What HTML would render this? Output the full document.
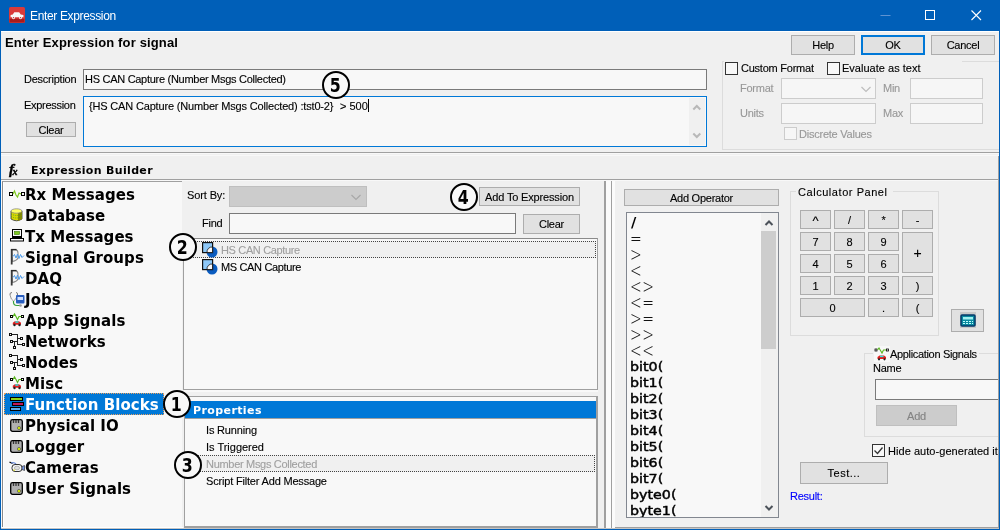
<!DOCTYPE html>
<html>
<head>
<meta charset="utf-8">
<title>Enter Expression</title>
<style>
html,body{margin:0;padding:0;background:#f0f0f0;}
body{width:1000px;height:530px;overflow:hidden;position:relative;font-family:"Liberation Sans",sans-serif;font-size:11px;color:#000;}
#win{will-change:transform;position:absolute;left:0;top:0;width:1000px;height:530px;background:#f0f0f0;overflow:hidden;}
.a{position:absolute;box-sizing:border-box;white-space:nowrap;}
.t{position:absolute;white-space:nowrap;line-height:14px;height:14px;font-size:11px;letter-spacing:-0.25px;-webkit-text-stroke:0.12px currentColor;}
.btn{position:absolute;box-sizing:border-box;border:1px solid #adadad;background:#e1e1e1;text-align:center;font-size:11px;letter-spacing:-0.25px;white-space:nowrap;-webkit-text-stroke:0.12px currentColor;}
.btn.dis{background:#cccccc;border-color:#bfbfbf;color:#838383;}
.inp{position:absolute;box-sizing:border-box;border:1px solid #7a7a7a;background:#f8f8f8;}
.inp.dis{border-color:#cccccc;background:#f6f6f6;}
.chk{position:absolute;box-sizing:border-box;width:13px;height:13px;border:1px solid #333;background:#f8f8f8;}
.chk.dis{border-color:#cccccc;background:#f6f6f6;}
.grp{position:absolute;box-sizing:border-box;border:1px solid #dcdcdc;}
.gray{color:#989898;}
.li{position:absolute;left:25px;height:21px;line-height:21px;font-family:"DejaVu Sans","Liberation Sans",sans-serif;font-weight:bold;font-size:15px;letter-spacing:0.05px;white-space:nowrap;}
.ic{position:absolute;}
.op{position:absolute;left:3px;height:16px;line-height:16px;font-family:"DejaVu Sans","Liberation Sans",sans-serif;font-weight:normal;font-size:12.5px;letter-spacing:0;-webkit-text-stroke:0.45px #000;white-space:nowrap;transform:scaleX(1.14);transform-origin:0 50%;}
.sy{font-family:"DejaVu Sans","Liberation Sans",sans-serif;font-weight:200;font-size:14px;letter-spacing:0.4px;-webkit-text-stroke:0;transform:scaleY(1.4);transform-origin:0 50%;color:#111;}
.num{position:absolute;box-sizing:border-box;width:28px;height:28px;border:2.9px solid #000;border-radius:50%;background:#f8f8f8;text-align:center;font-family:"DejaVu Sans Condensed","DejaVu Sans","Liberation Sans",sans-serif;font-weight:bold;font-size:19.5px;line-height:26.6px;text-indent:-1px;}
.num span{display:inline-block;transform:scaleX(0.9);}
</style>
</head>
<body>
<div id="win">
<!-- TITLEBAR -->
<div class="a" id="titlebar" style="left:0;top:0;width:1000px;height:31px;background:#005fb8;"></div>
<div class="a" style="left:30px;top:8px;height:16px;line-height:16px;color:#fff;font-size:12px;letter-spacing:-0.35px;">Enter Expression</div>
<!-- BODY -->
<div class="a" style="left:0;top:31px;width:1px;height:499px;background:#005fb8;"></div>
<div class="a" style="left:999px;top:31px;width:1px;height:499px;background:#005fb8;"></div>
<div class="a" style="left:0;top:529px;width:1000px;height:1px;background:#005fb8;z-index:5;"></div>
<div class="a" style="left:1px;top:528px;width:998px;height:1px;background:#c4c4c4;z-index:5;"></div>
<div class="a" style="left:1px;top:31px;width:998px;height:1px;background:#fff;"></div>
<!--TOP-->
<svg class="a" style="left:9px;top:7px" width="16" height="16" viewBox="0 0 15 15"><rect x="0" y="0" width="15" height="15" rx="1.5" fill="#d93a3a"/><rect x="0.5" y="11" width="14" height="3.5" fill="#a81c1c"/><path d="M1.5 9.5 L1.5 7.5 L3.5 7 L5 5 L9.5 5 L11 7 L13.5 7.5 L13.5 9.5 Z" fill="#f8f8f8"/><circle cx="4.2" cy="10" r="1.4" fill="#f8f8f8"/><circle cx="10.8" cy="10" r="1.4" fill="#f8f8f8"/><circle cx="4.2" cy="10" r="0.6" fill="#a33"/><circle cx="10.8" cy="10" r="0.6" fill="#a33"/></svg>
<svg class="a" style="left:870px;top:5px" width="125" height="22" viewBox="0 0 125 22"><path d="M10.5 10.5 H20.5" stroke="#5e93d2" stroke-width="1" fill="none"/><rect x="55.5" y="5.5" width="9" height="9" stroke="#fff" stroke-width="1" fill="none"/><path d="M101.5 5.5 L111 15 M111 5.5 L101.5 15" stroke="#fff" stroke-width="1.1" fill="none"/></svg>
<div class="a" style="left:5px;top:34px;height:17px;line-height:17px;font-weight:bold;font-size:13px;letter-spacing:0.15px;">Enter Expression for signal</div>
<div class="btn" style="left:791px;top:35px;width:64px;height:20px;line-height:18px;">Help</div>
<div class="btn" style="left:861px;top:35px;width:64px;height:20px;line-height:16px;border:2px solid #0078d7;">OK</div>
<div class="btn" style="left:931px;top:35px;width:64px;height:20px;line-height:18px;">Cancel</div>
<div class="t" style="left:24px;top:72px;letter-spacing:-0.243px;">Description</div>
<div class="inp" style="left:83px;top:69px;width:624px;height:21px;"></div>
<div class="t" style="left:85px;top:72px;letter-spacing:-0.284px;">HS CAN Capture (Number Msgs Collected)</div>
<div class="t" style="left:24px;top:98px;letter-spacing:-0.291px;">Expression</div>
<div class="inp" style="left:83px;top:96px;width:624px;height:51px;border-color:#0078d7;"></div>
<div class="a" style="left:689px;top:98px;width:16px;height:47px;background:#f0f0f0;"></div>
<svg class="a" style="left:689px;top:98px" width="16" height="47" viewBox="0 0 16 47"><path d="M4.300 11.500 L7.800 8 L11.300 11.500" stroke="#b8b8b8" stroke-width="2" fill="none"/><path d="M4.300 35.500 L7.800 39 L11.300 35.500" stroke="#b8b8b8" stroke-width="2" fill="none"/></svg>
<div class="t" style="left:89px;top:99px;letter-spacing:-0.17px;">{HS CAN Capture (Number Msgs Collected) :tst0-2}</div>
<div class="t" style="left:340px;top:99px;letter-spacing:0;">&gt; 500</div>
<div class="a" style="left:368px;top:99px;width:1px;height:13px;background:#000;"></div>
<div class="btn" style="left:26px;top:122px;width:50px;height:15px;line-height:14px;">Clear</div>
<div class="grp" style="left:722px;top:61px;width:290px;height:89px;"></div>
<div class="a" style="left:724px;top:58px;width:238px;height:8px;background:#f0f0f0;"></div>
<div class="chk" style="left:725px;top:62px;"></div>
<div class="t" style="left:741px;top:61px;letter-spacing:-0.233px;">Custom Format</div>
<div class="chk" style="left:827px;top:62px;"></div>
<div class="t" style="left:842px;top:61px;letter-spacing:0.015px;">Evaluate as text</div>
<div class="t gray" style="left:740px;top:81px;">Format</div>
<div class="inp dis" style="left:781px;top:78px;width:95px;height:21px;"></div>
<svg class="a" style="left:860px;top:84px" width="12" height="10" viewBox="0 0 12 10"><path d="M1.5 3 L6 7.5 L10.5 3" stroke="#bdbdbd" stroke-width="1.2" fill="none"/></svg>
<div class="t gray" style="left:883px;top:81px;">Min</div>
<div class="inp dis" style="left:910px;top:78px;width:73px;height:21px;"></div>
<div class="t gray" style="left:740px;top:106px;">Units</div>
<div class="inp dis" style="left:781px;top:103px;width:95px;height:21px;"></div>
<div class="t gray" style="left:883px;top:106px;">Max</div>
<div class="inp dis" style="left:910px;top:103px;width:73px;height:21px;"></div>
<div class="chk dis" style="left:784px;top:127px;"></div>
<div class="t gray" style="left:799px;top:127px;letter-spacing:-0.23px;">Discrete Values</div>
<div class="a" style="left:1px;top:152px;width:998px;height:1px;background:#a0a0a0;"></div>
<div class="a" style="left:1px;top:153px;width:998px;height:1px;background:#f8f8f8;"></div>
<!--BUILDER-->
<div class="a" style="left:1px;top:155px;width:998px;height:1px;background:#f8f8f8;"></div>
<div class="a" style="left:1px;top:179px;width:998px;height:1px;background:#a0a0a0;"></div>
<div class="a" style="left:1px;top:180px;width:998px;height:1px;background:#f8f8f8;"></div>
<div class="a" style="left:998px;top:156px;width:1px;height:372px;background:#a0a0a0;"></div>
<div class="a" style="left:9px;top:161px;height:16px;line-height:16px;font-family:'Liberation Serif',serif;font-style:italic;font-weight:bold;font-size:15px;-webkit-text-stroke:0.4px #000;">f<span style="font-size:10px;font-style:italic;margin-left:-1.500px;position:relative;top:1px;">x</span></div>
<div class="a" style="left:31px;top:163px;height:16px;line-height:16px;font-family:'DejaVu Sans','Liberation Sans',sans-serif;font-weight:bold;font-size:11px;letter-spacing:0.33px;">Expression Builder</div>
<!--LEFT-->
<div class="a" style="left:2px;top:181px;width:180px;height:346px;background:#f8f8f8;border-left:1px solid #8a8a8a;border-top:1px solid #a0a0a0;"></div>
<div class="a" style="left:3px;top:182px;width:1px;height:345px;background:#fff;"></div>
<div class="a" style="left:1px;top:527px;width:182px;height:1px;background:#fff;"></div>
<div class="a" style="left:1px;top:181px;width:1px;height:347px;background:#f8f8f8;"></div>
<div class="a" style="left:4px;top:393px;width:160px;height:22px;background:#0078d7;border:1px dotted #e8a060;"></div>
<svg class="ic" style="left:9px;top:184px" width="17" height="21" viewBox="0 0 17 21"><rect x="0.5" y="8.5" width="3" height="3" fill="#f8f8f8" stroke="#000"/><rect x="12.500" y="8.5" width="3" height="3" fill="#f8f8f8" stroke="#000"/><path d="M4 10 L5.5 7 L7 11 L8.500 13 L10 9 L12 10" stroke="#7ec820" stroke-width="1.2" fill="none"/></svg>
<div class="li" style="top:185px">Rx Messages</div>
<svg class="ic" style="left:10px;top:204px" width="13" height="21" viewBox="0 0 13 21"><path d="M1 7 L1 15 Q6.500 18.500 12 15 L12 7 Z" fill="#d8d800" stroke="#444" stroke-width="0.9"/><path d="M8 8 L12 7 L12 15 L8 17 Z" fill="#8a8a00"/><ellipse cx="6.500" cy="7" rx="5.500" ry="2.200" fill="#ffff66" stroke="#888" stroke-width="0.8"/><path d="M1 10 Q6.500 13 12 10 M1 12.500 Q6.500 15.500 12 12.500" stroke="#3a8a3a" stroke-width="0.7" fill="none" stroke-dasharray="1 1"/></svg>
<div class="li" style="top:206px">Database</div>
<svg class="ic" style="left:10px;top:225px" width="15" height="21" viewBox="0 0 15 21"><rect x="2.500" y="4.500" width="9" height="7" fill="#f8f8f8" stroke="#000"/><rect x="4.500" y="6.500" width="5" height="3" fill="#7ec820" stroke="#3a7a00" stroke-width="0.6"/><rect x="0.500" y="13.500" width="13" height="2.500" fill="#f8f8f8" stroke="#000"/><path d="M2 12.500 H12" stroke="#000"/></svg>
<div class="li" style="top:227px">Tx Messages</div>
<svg class="ic" style="left:10px;top:246px" width="15" height="21" viewBox="0 0 15 21"><path d="M1.700 3.600 H5.500 Q8 4 8 7 V12 Q7 14.500 2.500 15.500 Z" stroke="#8a8a8a" stroke-width="1.100" fill="#f4f4f4"/><path d="M1.700 3 V18.500" stroke="#3a3a3a" stroke-width="1.800"/><path d="M1 3.600 H6.500" stroke="#2a2a2a" stroke-width="1.400"/><path d="M3 10.500 L4.500 8.500 L6 12 L7.500 8 L9 12.500 L10.500 8.500 L12 11.500 L14 9.500" stroke="#4a98e8" stroke-width="1" fill="none"/></svg>
<div class="li" style="top:248px">Signal Groups</div>
<svg class="ic" style="left:10px;top:267px" width="15" height="21" viewBox="0 0 15 21"><path d="M1.700 3.600 H5.500 Q8 4 8 7 V12 Q7 14.500 2.500 15.500 Z" stroke="#8a8a8a" stroke-width="1.100" fill="#f4f4f4"/><path d="M1.700 3 V18.500" stroke="#3a3a3a" stroke-width="1.800"/><path d="M1 3.600 H6.500" stroke="#2a2a2a" stroke-width="1.400"/><path d="M3 10.500 L4.500 8.500 L6 12 L7.500 8 L9 12.500 L10.500 8.500 L12 11.500 L14 9.500" stroke="#4a98e8" stroke-width="1" fill="none"/></svg>
<div class="li" style="top:269px">DAQ</div>
<svg class="ic" style="left:9px;top:289px" width="16" height="21" viewBox="0 0 16 21"><path d="M1 6 Q0.500 3.500 3 3.500 M8.500 6 Q9 3.500 7 3.500" stroke="#777" stroke-width="1" fill="none"/><path d="M1 6 Q2 11 4.500 12 Q7 11 8.500 6" stroke="#999" stroke-width="1" fill="none"/><path d="M4.500 12 Q4 16.500 8 16.500 L11 16.500" stroke="#3aa03a" stroke-width="1.200" fill="none"/><circle cx="11.500" cy="16.500" r="1.300" fill="#999"/><rect x="7" y="6" width="8.500" height="8.500" rx="1" fill="#2a5fc0"/><rect x="8.500" y="8" width="5.500" height="3" fill="#cfe0ff"/></svg>
<div class="li" style="top:290px">Jobs</div>
<svg class="ic" style="left:10px;top:310px" width="15" height="21" viewBox="0 0 15 21"><rect x="0.500" y="5.500" width="2" height="2" fill="#f8f8f8" stroke="#000" shape-rendering="crispEdges"/><rect x="11.500" y="5.500" width="2" height="2" fill="#f8f8f8" stroke="#000" shape-rendering="crispEdges"/><path d="M3 6.500 L4.500 4 L6 6.500 L7.500 9.500 L9 6.500 L11.500 6.500" stroke="#5ab81e" stroke-width="1.200" fill="none"/><path d="M2.800 14.800 L2.800 12.800 L4.800 11.200 L9 11.200 L11 12.800 L11 14.800 Z" fill="#e02020"/><rect x="5.300" y="11.300" width="3.200" height="1.500" fill="#30e0e0"/><circle cx="4.500" cy="15" r="1.200" fill="#222"/><circle cx="9.500" cy="15" r="1.200" fill="#222"/></svg>
<div class="li" style="top:311px">App Signals</div>
<svg class="ic" style="left:9px;top:330px" width="17" height="21" viewBox="0 0 17 21" shape-rendering="crispEdges"><path d="M3 4.500 H8.500 V14.500 H13.500 M8.500 8.500 H11.500 M4 11.500 H8.500 M5.500 12 V16.500" stroke="#222" stroke-width="1" fill="none"/><rect x="0.500" y="3.500" width="2" height="2" fill="#f8f8f8" stroke="#111"/><rect x="11.500" y="7.500" width="2" height="2" fill="#f8f8f8" stroke="#111"/><rect x="1.500" y="10.500" width="2" height="2" fill="#f8f8f8" stroke="#111"/><rect x="13.500" y="13.500" width="2" height="2" fill="#f8f8f8" stroke="#111"/><rect x="4.500" y="16.500" width="2" height="2" fill="#f8f8f8" stroke="#111"/></svg>
<div class="li" style="top:332px">Networks</div>
<svg class="ic" style="left:9px;top:351px" width="17" height="21" viewBox="0 0 17 21" shape-rendering="crispEdges"><path d="M3 4.500 H8.500 V14.500 H13.500 M8.500 8.500 H11.500 M4 11.500 H8.500 M5.500 12 V16.500" stroke="#222" stroke-width="1" fill="none"/><rect x="0.500" y="3.500" width="2" height="2" fill="#f8f8f8" stroke="#111"/><rect x="11.500" y="7.500" width="2" height="2" fill="#f8f8f8" stroke="#111"/><rect x="1.500" y="10.500" width="2" height="2" fill="#f8f8f8" stroke="#111"/><rect x="13.500" y="13.500" width="2" height="2" fill="#f8f8f8" stroke="#111"/><rect x="4.500" y="16.500" width="2" height="2" fill="#f8f8f8" stroke="#111"/></svg>
<div class="li" style="top:353px">Nodes</div>
<svg class="ic" style="left:10px;top:373px" width="15" height="21" viewBox="0 0 15 21"><rect x="0.500" y="5.500" width="2" height="2" fill="#f8f8f8" stroke="#000" shape-rendering="crispEdges"/><rect x="11.500" y="5.500" width="2" height="2" fill="#f8f8f8" stroke="#000" shape-rendering="crispEdges"/><path d="M3 6.500 L4.500 4 L6 6.500 L7.500 9.500 L9 6.500 L11.500 6.500" stroke="#5ab81e" stroke-width="1.200" fill="none"/><path d="M2.800 14.800 L2.800 12.800 L4.800 11.200 L9 11.200 L11 12.800 L11 14.800 Z" fill="#e02020"/><rect x="5.300" y="11.300" width="3.200" height="1.500" fill="#30e0e0"/><circle cx="4.500" cy="15" r="1.200" fill="#222"/><circle cx="9.500" cy="15" r="1.200" fill="#222"/></svg>
<div class="li" style="top:374px">Misc</div>
<svg class="ic" style="left:9px;top:393px" width="16" height="21" viewBox="0 0 16 21"><rect x="1.500" y="4.500" width="12" height="3" fill="#8fd018" stroke="#000"/><rect x="3.500" y="9.500" width="11" height="3" fill="#c0185a" stroke="#000"/><rect x="1.500" y="14.500" width="10" height="3" fill="#58a8e8" stroke="#000"/></svg>
<div class="li" style="top:395px;color:#fff">Function Blocks</div>
<svg class="ic" style="left:10px;top:415px" width="14" height="21" viewBox="0 0 14 21"><rect x="0.700" y="4.700" width="11.600" height="11.600" rx="1.800" fill="#b0b0b0" stroke="#000" stroke-width="1.300"/><path d="M3.500 5 V8 M6 5 V8 M8.500 5 V8" stroke="#333" stroke-width="1.300"/><circle cx="9" cy="13" r="1.600" fill="#d8f000" stroke="#555" stroke-width="0.700"/></svg>
<div class="li" style="top:416px">Physical IO</div>
<svg class="ic" style="left:10px;top:436px" width="14" height="21" viewBox="0 0 14 21"><rect x="0.700" y="4.700" width="11.600" height="11.600" rx="1.800" fill="#b0b0b0" stroke="#000" stroke-width="1.300"/><path d="M3.500 5 V8 M6 5 V8 M8.500 5 V8" stroke="#333" stroke-width="1.300"/><circle cx="9" cy="13" r="1.600" fill="#d8f000" stroke="#555" stroke-width="0.700"/></svg>
<div class="li" style="top:437px">Logger</div>
<svg class="ic" style="left:9px;top:456px" width="17" height="21" viewBox="0 0 17 21"><path d="M0.500 6 L3.500 7.500" stroke="#000" stroke-width="1.300"/><path d="M2 7 Q5 6 7 8" stroke="#6a8ad8" stroke-width="1.200" fill="none"/><rect x="3" y="8.500" width="10" height="7" rx="3" fill="#f4f4f4" stroke="#333" stroke-width="1"/><ellipse cx="8" cy="12" rx="2.600" ry="1.800" fill="#e0e0e0" stroke="#999" stroke-width="0.600"/><path d="M13 10.500 L15.500 9.500 L15.500 14.500 L13 13.500 Z" fill="#7a9ae8" stroke="#333" stroke-width="0.700"/><rect x="4.500" y="13.500" width="1.300" height="1.300" fill="#e0e000"/></svg>
<div class="li" style="top:458px">Cameras</div>
<svg class="ic" style="left:10px;top:478px" width="14" height="21" viewBox="0 0 14 21"><rect x="0.700" y="4.700" width="11.600" height="11.600" rx="1.800" fill="#b0b0b0" stroke="#000" stroke-width="1.300"/><path d="M3.500 5 V8 M6 5 V8 M8.500 5 V8" stroke="#333" stroke-width="1.300"/><circle cx="9" cy="13" r="1.600" fill="#d8f000" stroke="#555" stroke-width="0.700"/></svg>
<div class="li" style="top:479px">User Signals</div>
<!--MID-->
<div class="t" style="left:187px;top:188px;letter-spacing:-0.118px;">Sort By:</div>
<div class="a" style="left:229px;top:186px;width:138px;height:21px;background:#cccccc;border:1px solid #bfbfbf;"></div>
<svg class="a" style="left:350px;top:192px" width="12" height="10" viewBox="0 0 12 10"><path d="M1.500 3 L6 7.500 L10.500 3" stroke="#a8a8a8" stroke-width="1.200" fill="none"/></svg>
<div class="btn" style="left:479px;top:187px;width:101px;height:19px;line-height:18px;letter-spacing:-0.158px;">Add To Expression</div>
<div class="t" style="left:202px;top:216px;letter-spacing:-0.235px;">Find</div>
<div class="inp" style="left:229px;top:213px;width:287px;height:21px;"></div>
<div class="btn" style="left:523px;top:214px;width:57px;height:20px;line-height:18px;">Clear</div>
<div class="a" style="left:183px;top:238px;width:415px;height:152px;background:#f8f8f8;border:1px solid #a0a0a0;border-top-color:#8a8a8a;"></div>
<div class="a" style="left:185px;top:241px;width:411px;height:17px;background:#f0f0f0;border:1px dotted #444;"></div>
<svg class="ic" style="left:202px;top:242px" width="16" height="16" viewBox="0 0 16 16"><circle cx="10" cy="10" r="5.500" fill="#0a5cc0"/><rect x="0.600" y="0.600" width="10" height="10" fill="#8ec8f8" stroke="#111" stroke-width="1.200"/><path d="M5 10.500 A5 5 0 0 1 10.500 5 L10.500 10.500 Z" fill="#f8f8f8" stroke="#111" stroke-width="0.800"/></svg>
<div class="t gray" style="left:221px;top:243px;color:#a0a0a0;letter-spacing:-0.351px;">HS CAN Capture</div>
<svg class="ic" style="left:202px;top:259px" width="16" height="16" viewBox="0 0 16 16"><circle cx="10" cy="10" r="5.500" fill="#0a5cc0"/><rect x="0.600" y="0.600" width="10" height="10" fill="#8ec8f8" stroke="#111" stroke-width="1.200"/><path d="M5 10.500 A5 5 0 0 1 10.500 5 L10.500 10.500 Z" fill="#f8f8f8" stroke="#111" stroke-width="0.800"/></svg>
<div class="t" style="left:221px;top:260px;letter-spacing:-0.345px;">MS CAN Capture</div>
<div class="a" style="left:184px;top:390px;width:414px;height:2px;background:#f8f8f8;"></div>
<div class="a" style="left:184px;top:396px;width:414px;height:132px;background:#f8f8f8;border:1px solid #a0a0a0;border-right-width:2px;border-bottom-width:2px;"></div>
<div class="a" style="left:185px;top:401px;width:411px;height:17px;background:#0078d7;"></div>
<div class="a" style="left:185px;top:418px;width:411px;height:1px;background:#a0a0a0;"></div>
<div class="a" style="left:193px;top:403px;height:16px;line-height:16px;color:#fff;font-family:'DejaVu Sans','Liberation Sans',sans-serif;font-weight:bold;font-size:11px;letter-spacing:0.4px;">Properties</div>
<div class="t" style="left:206px;top:423px;letter-spacing:-0.177px;">Is Running</div>
<div class="t" style="left:206px;top:440px;letter-spacing:-0.009px;">Is Triggered</div>
<div class="a" style="left:186px;top:455px;width:409px;height:17px;background:#f0f0f0;border:1px dotted #444;"></div>
<div class="t" style="left:206px;top:457px;color:#a0a0a0;letter-spacing:-0.304px;">Number Msgs Collected</div>
<div class="t" style="left:206px;top:474px;letter-spacing:-0.181px;">Script Filter Add Message</div>
<div class="a" style="left:604px;top:181px;width:2px;height:347px;background:#a0a0a0;"></div>
<div class="a" style="left:614px;top:527px;width:385px;height:1px;background:#a0a0a0;"></div>
<div class="a" style="left:606px;top:181px;width:5px;height:347px;background:#fbfbfb;"></div>
<div class="a" style="left:611px;top:181px;width:1px;height:347px;background:#a0a0a0;"></div>
<div class="a" style="left:612px;top:181px;width:3px;height:347px;background:#fbfbfb;"></div>
<!--RIGHT-->
<div class="btn" style="left:624px;top:189px;width:155px;height:17px;line-height:16px;">Add Operator</div>
<div class="a" style="left:626px;top:212px;width:153px;height:306px;background:#f8f8f8;border:1px solid #828790;overflow:hidden;"></div>
<div class="a" style="left:761px;top:213px;width:17px;height:304px;background:#f0f0f0;"></div>
<div class="a" style="left:761px;top:231px;width:15px;height:118px;background:#cdcdcd;"></div>
<svg class="a" style="left:761px;top:213px" width="17" height="306" viewBox="0 0 17 306"><path d="M4.500 12 L8 8.500 L11.500 12" stroke="#4c525a" stroke-width="2" fill="none"/><path d="M4.500 293 L8 296.500 L11.500 293" stroke="#4c525a" stroke-width="2" fill="none"/></svg>
<div class="a" style="left:627px;top:213px;width:134px;height:304px;overflow:hidden;">
<div class="op" style="top:1px;font-size:14.5px;left:4px;font-weight:bold;-webkit-text-stroke:0;transform:none">/</div>
<div class="op sy" style="top:17px">=</div>
<div class="op sy" style="top:33px">&gt;</div>
<div class="op sy" style="top:49px">&lt;</div>
<div class="op sy" style="top:65px">&lt;&gt;</div>
<div class="op sy" style="top:81px">&lt;=</div>
<div class="op sy" style="top:97px">&gt;=</div>
<div class="op sy" style="top:113px">&gt;&gt;</div>
<div class="op sy" style="top:129px">&lt;&lt;</div>
<div class="op" style="top:146px">bit0(</div>
<div class="op" style="top:162px">bit1(</div>
<div class="op" style="top:178px">bit2(</div>
<div class="op" style="top:194px">bit3(</div>
<div class="op" style="top:210px">bit4(</div>
<div class="op" style="top:226px">bit5(</div>
<div class="op" style="top:242px">bit6(</div>
<div class="op" style="top:258px">bit7(</div>
<div class="op" style="top:274px">byte0(</div>
<div class="op" style="top:290px">byte1(</div>
</div>
<div class="grp" style="left:790px;top:191px;width:149px;height:145px;"></div>
<div class="a" style="left:796px;top:185px;width:97px;height:14px;background:#f0f0f0;"></div>
<div class="t" style="left:798px;top:185px;letter-spacing:0.55px;">Calculator Panel</div>
<div class="btn" style="left:800px;top:210px;width:31px;height:19px;line-height:17px;padding-top:1px;font-size:13px;">^</div>
<div class="btn" style="left:834px;top:210px;width:31px;height:19px;line-height:17px;padding-top:1px;">/</div>
<div class="btn" style="left:868px;top:210px;width:31px;height:19px;line-height:17px;padding-top:1px;">*</div>
<div class="btn" style="left:902px;top:210px;width:31px;height:19px;line-height:17px;padding-top:1px;">-</div>
<div class="btn" style="left:800px;top:232px;width:31px;height:19px;line-height:17px;padding-top:1px;">7</div>
<div class="btn" style="left:834px;top:232px;width:31px;height:19px;line-height:17px;padding-top:1px;">8</div>
<div class="btn" style="left:868px;top:232px;width:31px;height:19px;line-height:17px;padding-top:1px;">9</div>
<div class="btn" style="left:902px;top:232px;width:31px;height:41px;line-height:39px;padding-top:1px;font-size:14px;">+</div>
<div class="btn" style="left:800px;top:254px;width:31px;height:19px;line-height:17px;padding-top:1px;">4</div>
<div class="btn" style="left:834px;top:254px;width:31px;height:19px;line-height:17px;padding-top:1px;">5</div>
<div class="btn" style="left:868px;top:254px;width:31px;height:19px;line-height:17px;padding-top:1px;">6</div>
<div class="btn" style="left:800px;top:276px;width:31px;height:19px;line-height:17px;padding-top:1px;">1</div>
<div class="btn" style="left:834px;top:276px;width:31px;height:19px;line-height:17px;padding-top:1px;">2</div>
<div class="btn" style="left:868px;top:276px;width:31px;height:19px;line-height:17px;padding-top:1px;">3</div>
<div class="btn" style="left:902px;top:276px;width:31px;height:19px;line-height:17px;padding-top:1px;">)</div>
<div class="btn" style="left:800px;top:298px;width:65px;height:19px;line-height:17px;padding-top:1px;">0</div>
<div class="btn" style="left:868px;top:298px;width:31px;height:19px;line-height:17px;padding-top:1px;">.</div>
<div class="btn" style="left:902px;top:298px;width:31px;height:19px;line-height:17px;padding-top:1px;">(</div>
<div class="btn" style="left:951px;top:309px;width:33px;height:23px;"></div>
<svg class="a" style="left:959px;top:312px" width="18" height="17" viewBox="0 0 18 17"><rect x="1" y="0" width="16" height="16" fill="#c8c8c8"/><rect x="2" y="3" width="14" height="11" rx="1" fill="#0a8aa0" stroke="#043a6a" stroke-width="1.500"/><rect x="4" y="5" width="10" height="2.500" fill="#a0f0f0"/><path d="M4 9.500 H14 M4 11.500 H14" stroke="#c0ffff" stroke-width="1" stroke-dasharray="2 1"/></svg>
<div class="grp" style="left:864px;top:353px;width:150px;height:84px;"></div>
<div class="a" style="left:873px;top:346px;width:106px;height:16px;background:#f0f0f0;"></div>
<svg class="a" style="left:874px;top:346px" width="16" height="16" viewBox="0 0 16 16"><rect x="0" y="0" width="16" height="16" fill="#f8f8f8"/><rect x="1" y="3" width="2" height="2" fill="#f8f8f8" stroke="#000" stroke-width="0.800"/><rect x="12.500" y="3" width="2" height="2" fill="#f8f8f8" stroke="#000" stroke-width="0.800"/><path d="M3.500 4 L5 2 L6.500 4.500 L8 7 L9.500 4 L12 4" stroke="#5ab81e" stroke-width="1.100" fill="none"/><path d="M3.500 13 L3.500 11 L5.500 9.500 L10 9.500 L12 11 L12 13 Z" fill="#e02020"/><rect x="6" y="9.800" width="3.500" height="1.300" fill="#30e0e0"/><circle cx="5" cy="13.300" r="1.100" fill="#222"/><circle cx="10.500" cy="13.300" r="1.100" fill="#222"/></svg>
<div class="t" style="left:890px;top:347px;letter-spacing:-0.331px;">Application Signals</div>
<div class="t" style="left:873px;top:361px;">Name</div>
<div class="inp" style="left:875px;top:379px;width:140px;height:21px;"></div>
<div class="btn dis" style="left:876px;top:405px;width:81px;height:21px;line-height:20px;">Add</div>
<div class="chk" style="left:872px;top:444px;"></div>
<svg class="a" style="left:872px;top:444px" width="13" height="13" viewBox="0 0 13 13"><path d="M2.500 6.500 L5.500 9.500 L10.500 3.500" stroke="#333" stroke-width="1.300" fill="none"/></svg>
<div class="t" style="left:888px;top:444px;letter-spacing:0.05px;">Hide auto-generated items</div>
<div class="btn" style="left:800px;top:462px;width:88px;height:22px;line-height:20px;letter-spacing:0.5px;">Test...</div>
<div class="t" style="left:790px;top:489px;color:#0000ff;">Result:</div>
<div class="a" style="left:998px;top:156px;width:1px;height:372px;background:#a0a0a0;"></div>
<div class="a" style="left:999px;top:31px;width:1px;height:499px;background:#005fb8;"></div>
<!--NUMS-->
<div class="num" style="left:163px;top:390px;"><span>1</span></div>
<div class="num" style="left:169px;top:233px;"><span>2</span></div>
<div class="num" style="left:174px;top:451px;"><span>3</span></div>
<div class="num" style="left:450px;top:183px;"><span>4</span></div>
<div class="num" style="left:322px;top:71px;"><span>5</span></div>
</div>
</body>
</html>
